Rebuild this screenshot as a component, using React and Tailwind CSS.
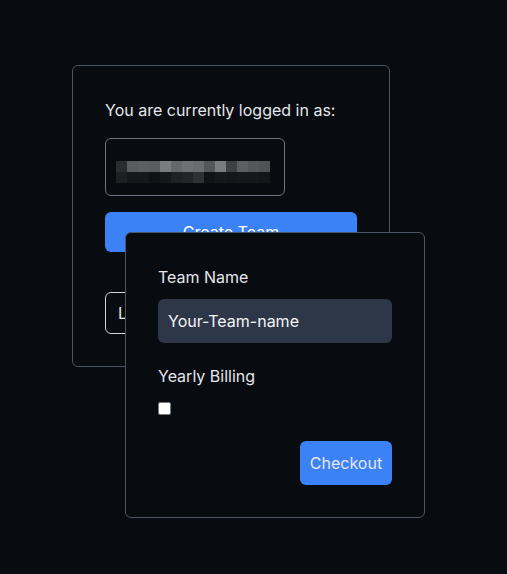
import React from "react";

const topRow = ["#2a2c30", "#595b5f", "#5c5e62", "#5a5c60", "#7a7c80", "#66686c", "#6e7074", "#6a6c70", "#54565a", "#7a7c80", "#3e4044", "#5c5e62", "#55575b", "#505256"];
const bottomRow = ["#1e2024", "#16181c", "#16181c", "#101216", "#16181c", "#1e2024", "#222428", "#2e3034", "#101216", "#16181c", "#14161a", "#16181c", "#16181c", "#131519"];

const App = () => {
    return (
        <div className="relative min-h-[574px] w-full bg-[#080b10] text-[#e5e7eb] font-['Inter',sans-serif] pt-[65px] pl-[72px]">
            {/* Account card */}
            <div className="w-[318px] border border-[#4b5563] rounded-md p-8">
                <p className="text-base leading-6 mb-4">You are currently logged in as:</p>
                <div className="w-[180px] h-[58px] border border-[#6b7280] rounded-md pl-[10px] pt-[22px]">
                    {/* pixelated email */}
                    <div className="flex">
                        {topRow.map((c, i) => (
                            <div key={i} className="w-[11px] h-[11px]" style={{ backgroundColor: c }} />
                        ))}
                    </div>
                    <div className="flex">
                        {bottomRow.map((c, i) => (
                            <div key={i} className="w-[11px] h-[11px]" style={{ backgroundColor: c }} />
                        ))}
                    </div>
                </div>
                <button className="mt-[16px] w-full h-[40px] bg-[#3b82f6] rounded-md text-white text-base">
                    Create Team
                </button>
                <button className="mt-[40px] h-[42px] px-3 border border-[#d1d5db] rounded-md text-base text-[#e5e7eb]">
                    Logout
                </button>
            </div>

            {/* Create team dialog */}
            <div className="absolute left-[125px] top-[232px] w-[300px] bg-[#080b10] border border-[#4b5563] rounded-md p-8">
                <label className="block text-base leading-6">Team Name</label>
                <input
                    type="text"
                    defaultValue="Your-Team-name"
                    className="mt-[10px] w-full h-[44px] bg-[#2d3748] rounded-md px-[10px] text-base text-[#f3f4f6] outline-none"
                />
                <label className="block mt-[21px] text-base leading-6">Yearly Billing</label>
                <input type="checkbox" className="block mt-[14px] w-[13px] h-[13px] m-0" />
                <div className="flex justify-end mt-[26px]">
                    <button className="h-[44px] w-[92px] bg-[#3b82f6] rounded-md text-base text-[#e5e7eb]">
                        Checkout
                    </button>
                </div>
            </div>
        </div>
    );
};

export default App;
